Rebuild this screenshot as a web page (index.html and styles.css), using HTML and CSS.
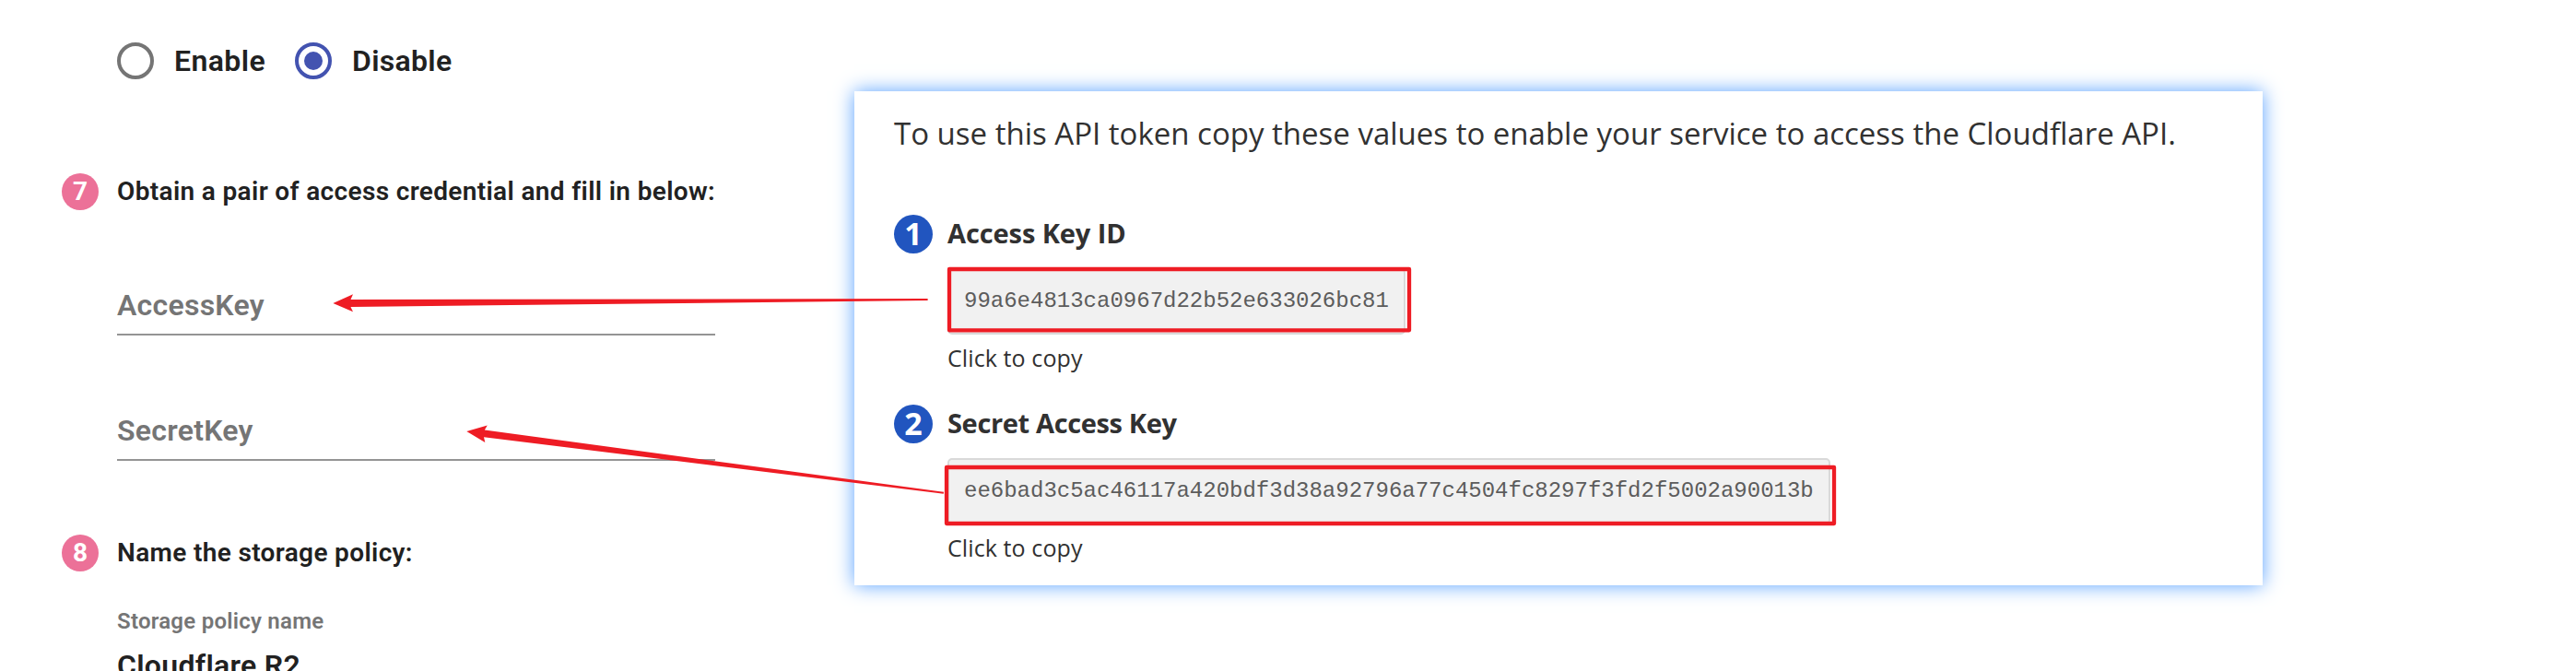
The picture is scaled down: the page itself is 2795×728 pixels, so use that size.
FILE: index.html
```
<!DOCTYPE html>
<html lang="en">
<head>
<meta charset="utf-8">
<title>Storage policy</title>
<link rel="stylesheet" href="styles.css">
</head>
<body>
<main class="page">
  <section class="form">
    <div class="radios">
      <label class="radio"><span class="ring"></span><span class="radio-text">Enable</span></label>
      <label class="radio"><span class="ring ring-on"></span><span class="radio-text tight">Disable</span></label>
    </div>
    <div class="step">
      <span class="step-no">7</span>
      <h2 class="step-title">Obtain a pair of access credential and fill in below:</h2>
    </div>
    <div class="field">AccessKey</div>
    <div class="field">SecretKey</div>
    <div class="step step-name">
      <span class="step-no">8</span>
      <h2 class="step-title">Name the storage policy:</h2>
    </div>
    <div class="policy-label">Storage policy name</div>
    <div class="policy-value">Cloudflare R2</div>
  </section>

  <section class="panel">
    <p class="intro">To use this API token copy these values to enable your service to access the Cloudflare API.</p>
    <div class="key">
      <span class="key-no">1</span>
      <h3 class="key-title">Access Key ID</h3>
      <code class="key-code">99a6e4813ca0967d22b52e633026bc81</code>
      <span class="key-hint">Click to copy</span>
    </div>
    <div class="key">
      <span class="key-no">2</span>
      <h3 class="key-title narrow">Secret Access Key</h3>
      <code class="key-code">ee6bad3c5ac46117a420bdf3d38a92796a77c4504fc8297f3fd2f5002a90013b</code>
      <span class="key-hint">Click to copy</span>
    </div>
  </section>

  <svg class="marks" width="2795" height="728" viewBox="0 0 2795 728">
    <g class="mark-box">
      <rect x="1030" y="292" width="499" height="66.3"/>
      <rect x="1027" y="507" width="963" height="61"/>
    </g>
    <g class="mark-arrow">
      <path d="M361.4 329L383 319.3L380.5 325L1006.6 324V326L380.5 333L383 338.3Z"/>
      <path d="M506.3 468L528.8 461.5L525.8 466.5L1024 533.8L1023.7 535.8L525 474.3L526.3 480Z"/>
    </g>
  </svg>
</main>
</body>
</html>
```
FILE: styles.css
```
* { box-sizing: border-box; }
body { margin: 0; background: #fff; }
h2, h3, p { margin: 0; }

.page {
  position: relative;
  display: flex;
  align-items: flex-start;
  width: 2795px;
  height: 728px;
  overflow: hidden;
}

.form {
  width: 927px;
  padding: 46px 0 0 67px;
  font-family: Roboto, sans-serif;
  font-weight: 600;
  color: #212121;
}
.radios { display: flex; gap: 32px; padding-left: 60px; height: 40px; }
.radio {
  display: flex;
  align-items: center;
  gap: 22px;
  font-size: 32px;
  line-height: 40px;
  letter-spacing: 0.4px;
}
.tight { letter-spacing: 0.3px; }
.ring {
  display: grid;
  place-items: center;
  width: 40px;
  height: 40px;
  border: 4px solid #757575;
  border-radius: 50%;
}
.ring-on { border-color: #4353b0; }
.ring-on::after {
  content: "";
  width: 20px;
  height: 20px;
  border-radius: 50%;
  background: #4353b0;
}

.step { display: flex; gap: 20px; height: 40px; margin-top: 102px; }
.step-name { margin-top: 80px; }
.step-no {
  width: 40px;
  height: 40px;
  border-radius: 50%;
  background: #ec7198;
  color: #fff;
  font-size: 28px;
  font-weight: 700;
  line-height: 40px;
  text-align: center;
}
.step-title {
  font-size: 28px;
  font-weight: 600;
  line-height: 40px;
  letter-spacing: 0.35px;
}

.field {
  width: 649px;
  height: 63px;
  margin: 73px 0 0 60px;
  border-bottom: 2px solid #949494;
  color: #757575;
  font-size: 32px;
  line-height: 61px;
  letter-spacing: 0.25px;
}

.policy-label {
  margin: 41px 0 0 60px;
  color: #757575;
  font-size: 24px;
  line-height: 27px;
  letter-spacing: 0.25px;
}
.policy-value {
  margin: 15px 0 0 60px;
  font-size: 32px;
  line-height: 38px;
  letter-spacing: 0.3px;
}

.panel {
  width: 1528px;
  height: 536px;
  margin-top: 99px;
  padding: 23px 0 0 43px;
  background: #fff;
  box-shadow: 0 0 20px #5aa2ff;
  font-family: "Open Sans", "Noto Sans", sans-serif;
  color: #313131;
}
.intro { height: 46px; font-size: 33px; line-height: 46px; white-space: nowrap; }
.key {
  display: grid;
  grid-template-columns: 42px max-content;
  grid-template-rows: 42px 88px 42px;
  column-gap: 16px;
  margin-top: 34px;
}
.intro + .key { margin-top: 65px; }
.key-no {
  height: 42px;
  border-radius: 50%;
  background: #2155bf;
  color: #fff;
  font-size: 34px;
  font-weight: 700;
  line-height: 40px;
  text-align: center;
}
.key-title { font-size: 29px; font-weight: 700; line-height: 40px; letter-spacing: -0.1px; }
.narrow { letter-spacing: -0.35px; }
.key-code {
  grid-column: 2;
  justify-self: start;
  height: 72px;
  margin-top: 16px;
  padding: 0 16px;
  border: 2px solid #d9d9d9;
  border-radius: 5px;
  background: #f1f1f1;
  color: #5c5c5c;
  font-family: "Liberation Mono", monospace;
  font-size: 24px;
  line-height: 68px;
}
.key-hint {
  grid-column: 2;
  margin-top: 8px;
  font-size: 25px;
  line-height: 34px;
  letter-spacing: 0.1px;
}

.marks { position: absolute; inset: 0; }
.mark-box { fill: none; stroke: #ee1c24; stroke-width: 4.3; stroke-linejoin: round; }
.mark-arrow { fill: #ee1c24; }
```
